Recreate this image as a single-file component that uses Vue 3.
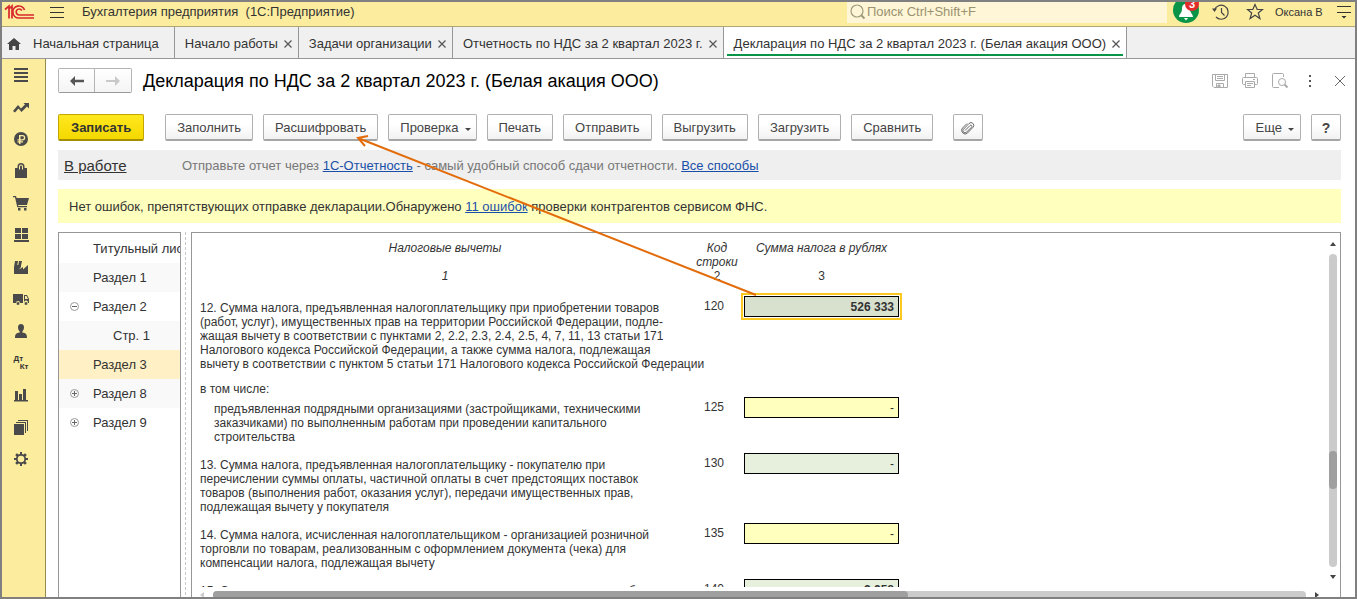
<script setup>
const tabs = [
  { title: 'Начало работы' },
  { title: 'Задачи организации' },
  { title: 'Отчетность по НДС за 2 квартал 2023 г.' },
  { title: 'Декларация по НДС за 2 квартал 2023 г. (Белая акация ООО)', active: true },
]

const sections = [
  { name: 'Меню', d: 'M1 1h14v2H1zM1 5h14v2H1zM1 9h14v2H1zM1 13h14v2H1z' },
  { name: 'Руководителю', d: 'M0 12L5 6l3 3.500L12 5.500L10.500 4H16V9.500L14 7.500L8.500 13L5.500 9.500L2 13.500z' },
  { name: 'Банк и касса', d: 'M8 1a7 7 0 1 0 0 14A7 7 0 1 0 8 1zM6 4h3.500a2.500 2.500 0 0 1 0 5.500H7.500v.7H10v1.300H7.500V13H6v-1.500H4.500v-1.300H6v-.7H4.500V8.200H6zM7.500 5.300v2.900h2a1.400 1.400 0 0 0 0-2.900z' },
  { name: 'Продажи', d: 'M2 5h2.500V3.500a3 3 0 0 1 7 0V5H14v10H2zM6 6.500h1V3.500a1 1 0 0 1 2 0V6.500h1V3.500a2 2 0 0 0-4 0z' },
  { name: 'Покупки', d: 'M0 1h3l.6 2H16l-2 7H5l.4 1H14v1.300H4.300L2 2.300H0zM5 13h2.500v2.500H5zM11 13h2.500v2.500H11z' },
  { name: 'Склад', d: 'M2 1h6v5H2zM9 1h6v5H9zM2 7h6v5H2zM9 7h6v5H9zM1 13h15v2H1z' },
  { name: 'Производство', d: 'M1 15V8l1-6h3l-.7 4H5.300L6 2h3l-1 4.500V8l-2 2.500L10 8v2.500L15 6v9z' },
  { name: 'Транспорт', d: 'M0 3h10v9H7a2 2 0 0 0-4 0H0zM11 4h3l2 4v4h-1a2 2 0 0 0-4-1zM12 5v3h3l-1.500-3zM3.700 11.200h2.600v2.600H3.700zM11.700 11.200h2.600v2.600h-2.600z' },
  { name: 'Зарплата и кадры', d: 'M8 1c2 0 3 1.300 3 3.300S10 8 9.300 8.500V9.500C13 10 14 11 14 15H2c0-4 1-5 4.700-5.500v-1C6 8 5 6.300 5 4.300S6 1 8 1z' },
  { name: 'Операции', letters: true },
  { name: 'Отчеты', d: 'M2 4h3v9h1V7h3v6h1V2h3v11h2v1.500H1V13h1z' },
  { name: 'Справочники', d: 'M1 5h10v11H1zM3 3h10v11h-1V4H3zM5 1h10v11h-1V2H5z' },
  { name: 'Администрирование', d: 'M7 1h2v2l1.500.6L12 2.200 13.800 4l-1.400 1.500L13 7h2v2h-2l-.6 1.500 1.400 1.500-1.800 1.800-1.500-1.400L9 13v2H7v-2l-1.500-.6L4 13.800 2.200 12l1.400-1.500L3 9H1V7h2l.6-1.500L2.200 4 4 2.200l1.500 1.400L7 3zM8 4.700a3.300 3.300 0 1 0 0 6.600 3.300 3.300 0 1 0 0-6.600z' },
]

const commands = [
  { title: 'Заполнить' },
  { title: 'Расшифровать' },
  { title: 'Проверка', menu: true },
  { title: 'Печать' },
  { title: 'Отправить' },
  { title: 'Выгрузить' },
  { title: 'Загрузить' },
  { title: 'Сравнить' },
]

const tree = [
  { title: 'Титульный лист' },
  { title: 'Раздел 1' },
  { title: 'Раздел 2', mark: 'minus' },
  { title: 'Стр. 1', child: true },
  { title: 'Раздел 3', selected: true },
  { title: 'Раздел 8', mark: 'plus' },
  { title: 'Раздел 9', mark: 'plus' },
]

const rows = [
  {
    code: '120', value: '526 333', kind: 'current',
    lines: [
      '12. Сумма налога, предъявленная налогоплательщику при приобретении товаров',
      '(работ, услуг), имущественных прав на территории Российской Федерации, подле-',
      'жащая вычету в соответствии с пунктами 2, 2.2, 2.3, 2.4, 2.5, 4, 7, 11, 13 статьи 171',
      'Налогового кодекса Российской Федерации, а также сумма налога, подлежащая',
      'вычету в соответствии с пунктом 5 статьи 171 Налогового кодекса Российской Федерации',
    ],
  },
  { note: true, lines: ['в том числе:'] },
  {
    code: '125', value: '-', kind: 'entry', nested: true,
    lines: [
      'предъявленная подрядными организациями (застройщиками, техническими',
      'заказчиками) по выполненным работам при проведении капитального',
      'строительства',
    ],
  },
  {
    code: '130', value: '-', kind: 'computed',
    lines: [
      '13. Сумма налога, предъявленная налогоплательщику - покупателю при',
      'перечислении суммы оплаты, частичной оплаты в счет предстоящих поставок',
      'товаров (выполнения работ, оказания услуг), передачи имущественных прав,',
      'подлежащая вычету у покупателя',
    ],
  },
  {
    code: '135', value: '-', kind: 'entry',
    lines: [
      '14. Сумма налога, исчисленная налогоплательщиком - организацией розничной',
      'торговли по товарам, реализованным с оформлением документа (чека) для',
      'компенсации налога, подлежащая вычету',
    ],
  },
  {
    code: '140', value: '2 258', kind: 'computed strong',
    lines: ['15. Сумма налога, исчисленная при выполнении строительно-монтажных работ для'],
  },
]
</script>

<template>
  <div class="window">
    <header class="topbar">
      <svg class="logo" viewBox="0 0 30 16" aria-label="1С">
        <g fill="none" stroke="#d9272e" stroke-width="1.700">
          <path d="M1 5.500L5 2V14.500M4.500 5.500L8 2V14.500" />
          <path d="M20.500 6A6 6 0 1 0 15 14H30" />
          <path d="M17.800 6.500A3 3 0 1 0 15 11H30" />
        </g>
      </svg>
      <button class="plain burger" aria-label="Главное меню"><i></i><i></i><i></i></button>
      <span class="app-name">Бухгалтерия предприятия&nbsp; (1С:Предприятие)</span>
      <label class="search">
        <svg viewBox="0 0 16 16" aria-hidden="true">
          <circle cx="7" cy="7" r="6" fill="none" stroke="#a09a7c" stroke-width="1.200" />
          <path d="M11 11l3.500 3.500" stroke="#a09a7c" stroke-width="2" />
        </svg>
        <input type="text" placeholder="Поиск Ctrl+Shift+F" aria-label="Поиск" />
      </label>
      <button class="plain bell" aria-label="Уведомления">
        <svg viewBox="0 0 26 26">
          <circle cx="13" cy="11" r="13" fill="#0a9447" />
          <path d="M13 5c3 0 4 2 4 5 0 4 3 5 3 8H6c0-3 3-4 3-8 0-3 1-5 4-5zM11 19h4l-2 2.500z" fill="#fff" />
        </svg>
        <span class="count">3</span>
      </button>
      <button class="plain history" aria-label="История">
        <svg viewBox="0 0 18 18" fill="none" stroke="#444" stroke-width="1.200">
          <path d="M2.500 7A7 7 0 1 1 4 14" />
          <path d="M9.500 5v4.500l3 3" />
          <path d="M0 5.500h5L2.500 9z" fill="#444" stroke="none" />
        </svg>
      </button>
      <button class="plain star" aria-label="Избранное">
        <svg viewBox="0 0 18 18" fill="none" stroke="#444" stroke-width="1.200">
          <path d="M9 1.500l2.200 5H16.500L12.300 10l1.600 5.500L9 12.300 4.100 15.500 5.700 10 1.500 6.500H6.800z" />
        </svg>
      </button>
      <a class="user" href="#">Оксана В</a>
      <button class="plain settings" aria-label="Настройки">
        <svg viewBox="0 0 14 14"><path d="M0 1h14v1H0zM0 7h14v1H0zM4.500 11h5L7 13.500z" fill="#333" /></svg>
      </button>
    </header>

    <nav class="tabs" aria-label="Открытые окна">
      <a class="tab home" href="#">
        <svg viewBox="0 0 14 12" aria-hidden="true"><path d="M7 0l7 6h-2v6H8.500V8h-3v4H2V6H0z" fill="#444" /></svg>
        Начальная страница
      </a>
      <div v-for="t in tabs" :key="t.title" class="tab" :class="{ active: t.active }">
        <a href="#">{{ t.title }}</a>
        <button class="plain close" :aria-label="'Закрыть: ' + t.title">
          <svg viewBox="0 0 8 8"><path d="M.5.5l7 7M7.500.5l-7 7" stroke="#555" stroke-width="1.200" /></svg>
        </button>
      </div>
    </nav>

    <div class="body">
      <aside class="sidebar">
        <button v-for="s in sections" :key="s.name" class="plain section" :aria-label="s.name">
          <span v-if="s.letters" class="letters"><b>Дт</b><b>Кт</b></span>
          <svg v-else viewBox="0 0 16 16"><path :d="s.d" fill="#4a4a4a" fill-rule="evenodd" /></svg>
        </button>
      </aside>

      <main class="form">
        <div class="heading">
          <div class="history-nav">
            <button aria-label="Назад">
              <svg viewBox="0 0 14 10"><path d="M0 5l5-5v3.700h9v2.600H5V10z" fill="#555" /></svg>
            </button>
            <button aria-label="Вперед" disabled>
              <svg viewBox="0 0 14 10"><path d="M14 5L9 0v4H0v2h9v4z" fill="#c9c9c9" /></svg>
            </button>
          </div>
          <h1>Декларация по НДС за 2 квартал 2023 г. (Белая акация ООО)</h1>
          <div class="form-tools">
            <button class="plain" aria-label="Сохранить">
              <svg viewBox="0 0 16 16" fill="none" stroke="#aaa">
                <path d="M.5 1.500h15v13H2L.5 13zM3.500 1.500v6h9v-6M5 3.500h6M5 5.500h6M4.500 14.500v-4h7v4" />
                <path d="M6 12h2v2H6z" fill="#aaa" />
              </svg>
            </button>
            <button class="plain" aria-label="Печать документа">
              <svg viewBox="0 0 16 16" fill="none" stroke="#aaa">
                <path d="M3.500 4V.5h9V4M3.500 11.500H1.500a1 1 0 0 1-1-1v-5a1 1 0 0 1 1-1h13a1 1 0 0 1 1 1v5a1 1 0 0 1-1 1h-2M3.500 8.500h9v6h-9zM5 10.500h6M5 12.500h4M11 6.500h2" />
              </svg>
            </button>
            <button class="plain" aria-label="Просмотр">
              <svg viewBox="0 0 16 16" fill="none" stroke="#aaa">
                <path d="M7 14.500H1.500a1 1 0 0 1-1-1v-12a1 1 0 0 1 1-1h9a1 1 0 0 1 1 1V4" />
                <circle cx="10" cy="9" r="3.500" />
                <path d="M12.500 11.500l3 3" stroke-width="2" />
              </svg>
            </button>
            <button class="plain" aria-label="Еще действия">
              <svg viewBox="0 0 16 16" fill="#555"><path d="M7 2h2v2H7zM7 7h2v2H7zM7 12h2v2H7z" /></svg>
            </button>
            <button class="plain" aria-label="Закрыть форму">
              <svg viewBox="0 0 16 16"><path d="M3 3l10 10M13 3L3 13" stroke="#666" /></svg>
            </button>
          </div>
        </div>

        <div class="toolbar">
          <button class="btn primary">Записать</button>
          <button v-for="c in commands" :key="c.title" class="btn">
            {{ c.title }}<span v-if="c.menu" class="caret"></span>
          </button>
          <button class="btn square attach" aria-label="Вложения">
            <svg viewBox="0 0 14 14" fill="none" stroke="#666">
              <path d="M4 9.500L9 4.500a1 1 0 0 1 1.600 1.600L5.500 11.200a2 2 0 0 1-3-3L8 2.500a2.600 2.600 0 0 1 4 3.800L6.500 12a3.300 3.300 0 0 1-4.800-.2A3.300 3.300 0 0 1 1.500 7L6 2.500" />
            </svg>
          </button>
          <button class="btn more">Еще<span class="caret"></span></button>
          <button class="btn square help">?</button>
        </div>

        <div class="status">
          <a class="state" href="#">В работе</a>
          <p>
            Отправьте отчет через <a href="#">1С-Отчетность</a> - самый удобный способ сдачи отчетности.
            <a href="#">Все способы</a>
          </p>
        </div>

        <p class="notice">
          Нет ошибок, препятствующих отправке декларации.Обнаружено <a href="#">11 ошибок</a> проверки контрагентов сервисом ФНС.
        </p>

        <div class="panes">
          <ul class="tree">
            <li v-for="n in tree" :key="n.title" :class="{ child: n.child, selected: n.selected }">
              <svg v-if="n.mark" viewBox="0 0 9 9" fill="none">
                <circle cx="4.500" cy="4.500" r="4" stroke="#999" />
                <path :d="n.mark === 'plus' ? 'M2 4.500h5M4.500 2v5' : 'M2 4.500h5'" stroke="#666" />
              </svg>
              <a href="#">{{ n.title }}</a>
            </li>
          </ul>
          <div class="splitter"></div>
          <section class="sheet">
            <div class="viewport">
              <table>
                <colgroup>
                  <col class="c-text" />
                  <col class="c-code" />
                  <col class="c-sum" />
                </colgroup>
                <thead>
                  <tr>
                    <th>Налоговые вычеты</th>
                    <th>Код строки</th>
                    <th>Сумма налога в рублях</th>
                  </tr>
                  <tr class="numbers">
                    <th>1</th>
                    <th class="upright">2</th>
                    <th class="upright">3</th>
                  </tr>
                </thead>
                <tbody>
                  <tr v-for="r in rows" :key="r.lines[0]" :class="{ note: r.note, nested: r.nested }">
                    <td class="text"><span v-for="l in r.lines" :key="l">{{ l }}</span></td>
                    <td class="code">{{ r.code }}</td>
                    <td class="sum">
                      <input v-if="r.code" type="text" :class="r.kind" :value="r.value" :aria-label="'Строка ' + r.code" />
                    </td>
                  </tr>
                </tbody>
              </table>
            </div>
            <div class="vscroll">
              <i class="arrow up"></i>
              <div class="track"><div class="thumb"></div></div>
              <i class="arrow down"></i>
            </div>
            <div class="hscroll">
              <i class="arrow left"></i>
              <div class="track"><div class="thumb"></div></div>
              <i class="arrow right"></i>
            </div>
          </section>
        </div>
      </main>
    </div>

    <svg class="pointer" viewBox="0 0 410 170" fill="none" stroke="#e36c0a" stroke-width="2" aria-hidden="true">
      <path d="M405 161L7 4M17 2L7 4l7 8" />
    </svg>
  </div>
</template>

<style>
html,
body {
  margin: 0;
  background: #fff;
}
</style>

<style scoped>
* {
  box-sizing: border-box;
}
.window {
  position: relative;
  display: flex;
  flex-direction: column;
  height: 100vh;
  border: 2px solid #808080;
  overflow: hidden;
  font: 13px/16px 'Liberation Sans', Arial, sans-serif;
  color: #333;
  background: #fff;
}
button,
input {
  font: inherit;
  color: inherit;
  margin: 0;
}
svg {
  display: block;
  flex: none;
}
a {
  color: #1a4fa8;
}
.plain {
  display: flex;
  align-items: center;
  justify-content: center;
  padding: 0;
  border: 0;
  background: none;
}

.topbar {
  display: flex;
  align-items: center;
  flex: none;
  height: 25px;
  padding: 0 4px 4px 2px;
  border-bottom: 1px solid #b0a574;
  background: #fbec9e;
}
.logo {
  width: 30px;
  height: 16px;
}
.burger {
  flex-direction: column;
  gap: 4px;
  width: 14px;
  margin: 0 18px 0 16px;
}
.burger i {
  width: 14px;
  height: 1px;
  background: #333;
}
.app-name {
  flex: 1;
  white-space: nowrap;
}
.search {
  display: flex;
  align-items: center;
  width: 320px;
  height: 21px;
  padding-left: 3px;
  background: #fef6d6;
}
.search svg {
  width: 16px;
  height: 16px;
}
.search input {
  flex: 1;
  min-width: 0;
  padding: 0 1px;
  border: 0;
  background: none;
  outline: 0;
}
.search input::placeholder {
  color: #9b9272;
  opacity: 1;
}
.bell {
  position: relative;
  width: 26px;
  height: 24px;
  margin: 0 13px 0 6px;
}
.bell svg {
  width: 26px;
  height: 26px;
}
.count {
  position: absolute;
  top: -3px;
  right: 0;
  width: 14px;
  height: 14px;
  border-radius: 7px;
  background: #e32b2b;
  color: #fff;
  font: bold 11px/14px 'Liberation Sans', Arial, sans-serif;
}
.history svg,
.star svg {
  width: 18px;
  height: 18px;
}
.star {
  margin: 0 11px 0 16px;
}
.user {
  width: 62px;
  color: #333;
  font-size: 11px;
  text-decoration: none;
  white-space: nowrap;
}
.settings svg {
  width: 14px;
  height: 14px;
}

.tabs {
  display: flex;
  flex: none;
  height: 32px;
  border-bottom: 1px solid #979797;
  background: #f0f0f0;
}
.tab {
  position: relative;
  display: flex;
  align-items: center;
  gap: 6px;
  padding: 2px 6px 0 10px;
  border-right: 1px solid #979797;
  white-space: nowrap;
}
.tab,
.tab a {
  color: #333;
  text-decoration: none;
}
.home {
  gap: 12px;
  padding: 2px 15px 0 5px;
}
.home svg {
  width: 14px;
  height: 12px;
}
.tab.active {
  background: #fff;
}
.tab.active::after {
  content: '';
  position: absolute;
  left: 3px;
  right: 3px;
  bottom: 2px;
  height: 2px;
  background: #0a9447;
}
.close svg {
  width: 8px;
  height: 8px;
}

.body {
  display: flex;
  flex: 1;
  min-height: 0;
}
.sidebar {
  flex: none;
  width: 44px;
  padding-right: 5px;
  border-right: 1px solid #958a4e;
  background: #fbec9e;
}
.section {
  width: 100%;
  height: 32px;
}
.section svg {
  width: 16px;
  height: 16px;
}
.letters {
  display: flex;
  flex-direction: column;
  width: 15px;
  font-size: 8px;
  line-height: 8px;
}
.letters b:first-child {
  text-align: left;
}
.letters b:last-child {
  text-align: right;
}

.form {
  display: flex;
  flex-direction: column;
  flex: 1;
  min-width: 0;
  padding: 9px 14px 0 12px;
}
.heading {
  display: flex;
  align-items: center;
  height: 25px;
}
.history-nav {
  display: flex;
  border: 1px solid #b4b4b4;
  border-bottom-color: #999;
  border-radius: 2px;
}
.history-nav button {
  display: flex;
  align-items: center;
  justify-content: center;
  width: 36px;
  height: 23px;
  padding: 0;
  border: 0;
  background: linear-gradient(#fff, #f4f4f4);
}
.history-nav button:first-child {
  border-right: 1px solid #b4b4b4;
}
.history-nav svg {
  width: 14px;
  height: 10px;
}
h1 {
  flex: 1;
  margin: 0 0 0 11px;
  color: #000;
  font-size: 18px;
  font-weight: normal;
  line-height: 24px;
  white-space: nowrap;
}
.form-tools {
  display: flex;
  gap: 14px;
  margin-right: -7px;
}
.form-tools svg {
  width: 16px;
  height: 16px;
}

.toolbar {
  display: flex;
  gap: 10px;
  margin-top: 21px;
}
.btn {
  display: flex;
  align-items: center;
  justify-content: center;
  height: 27px;
  padding: 2px 11px 0;
  border: 1px solid #b0b0b0;
  border-bottom: 2px solid #a5a5a5;
  border-radius: 2px;
  background: linear-gradient(#fff 40%, #f2f2f2);
  color: #444;
  white-space: nowrap;
}
.primary {
  margin-right: 11px;
  padding: 2px 12px 0;
  border-color: #c3a600;
  border-bottom-color: #a58d00;
  background: linear-gradient(#ffe81f, #f5d800);
  color: #333;
  font-weight: bold;
}
.caret {
  margin: 2px -6px 0 6px;
  border: 3px solid transparent;
  border-top-color: #444;
  border-bottom-width: 0;
}
.square {
  width: 30px;
  padding: 2px 0 0;
}
.attach {
  margin-left: 10px;
}
.attach svg {
  width: 14px;
  height: 14px;
}
.more {
  margin-left: auto;
  padding: 2px 12px 0;
}
.help {
  font-weight: bold;
  font-size: 14px;
}

.status {
  display: flex;
  align-items: center;
  height: 30px;
  margin-top: 9px;
  padding: 2px 0 0 6px;
  background: #efefef;
  color: #777;
}
.state {
  width: 118px;
  color: #333;
  font-size: 15px;
}
.status p {
  margin: 0;
}
.notice {
  margin: 9px 0;
  padding: 10px 11px 8px;
  background: #ffffbe;
}

.panes {
  display: flex;
  flex: 1;
  min-height: 0;
}
.tree {
  flex: none;
  width: 123px;
  margin: 0;
  padding: 1px 0 0;
  border: 1px solid #979797;
  border-bottom: 0;
  list-style: none;
  overflow: hidden;
}
.tree li {
  position: relative;
  display: flex;
  align-items: center;
  height: 29px;
  padding-left: 34px;
  white-space: nowrap;
}
.tree li:nth-child(even) {
  background: #f9f9f9;
}
.tree li.child {
  padding-left: 54px;
}
.tree li.selected {
  background: #fff1c5;
}
.tree a {
  color: #333;
  text-decoration: none;
}
.tree svg {
  position: absolute;
  left: 11px;
  width: 9px;
  height: 9px;
}
.splitter {
  flex: none;
  width: 1px;
  margin: 0 5px 0 4px;
  background: repeating-linear-gradient(#c8c8c8 0 3px, transparent 3px 5px);
}

.sheet {
  display: grid;
  grid-template: minmax(0, 1fr) 10px / minmax(0, 1fr) 20px;
  flex: 1;
  min-width: 0;
  border: 1px solid #979797;
  border-bottom: 0;
}
.viewport {
  overflow: hidden;
  padding: 8px 0 0 8px;
  font-size: 12px;
  line-height: 14px;
}
table {
  table-layout: fixed;
  width: 699px;
  border-collapse: collapse;
}
.c-text {
  width: 490px;
}
.c-code {
  width: 54px;
}
.c-sum {
  width: 155px;
}
th,
td {
  padding: 0;
  vertical-align: top;
}
th {
  font-weight: normal;
  font-style: italic;
}
.numbers th {
  padding-bottom: 13px;
}
.numbers .upright {
  font-style: normal;
}
.text {
  padding: 5px 0 9px;
  white-space: nowrap;
}
.text span {
  display: block;
}
.note td {
  padding: 2px 0 1px;
}
.nested .text {
  padding-left: 14px;
}
.code {
  padding: 3px 6px 0 0;
  text-align: center;
}
.sum input {
  display: block;
  width: 100%;
  height: 21px;
  padding: 0 4px;
  border: 1px solid #000;
  outline: 0;
  text-align: right;
}
.sum .entry {
  background: #ffffbe;
}
.sum .computed {
  background: #e6f0dc;
}
.sum .strong {
  font-weight: bold;
}
.sum .current {
  background: #d8e1ce;
  font-weight: bold;
  box-shadow: 0 0 0 1px #fff, 0 0 0 3px #fbc81f;
}

.vscroll,
.hscroll {
  display: flex;
  align-items: center;
}
.vscroll {
  flex-direction: column;
  gap: 8px;
  padding: 9px 0 8px 6px;
}
.vscroll .track {
  display: grid;
  grid-template-rows: 63fr 12fr 25fr;
  flex: 1;
  width: 8px;
}
.vscroll .thumb {
  grid-row: 2;
}
.hscroll {
  gap: 9px;
  height: 13px;
  padding: 2px 1px 0 8px;
}
.hscroll .track {
  display: grid;
  grid-template-columns: 636fr 364fr;
  flex: 1;
  height: 8px;
}
.track {
  border-radius: 4px;
  background: #cbcbcb;
}
.thumb {
  border-radius: 4px;
  background: #9f9f9f;
}
.arrow {
  flex: none;
  border: 3px solid transparent;
}
.up {
  border-top: 0;
  border-bottom: 4px solid #444;
}
.down {
  border-bottom: 0;
  border-top: 4px solid #444;
}
.left {
  border-left: 0;
  border-right: 4px solid #ccc;
}
.right {
  border-right: 0;
  border-left: 4px solid #444;
}

.pointer {
  position: absolute;
  top: 132px;
  left: 349px;
  width: 410px;
  height: 170px;
  pointer-events: none;
}
</style>
